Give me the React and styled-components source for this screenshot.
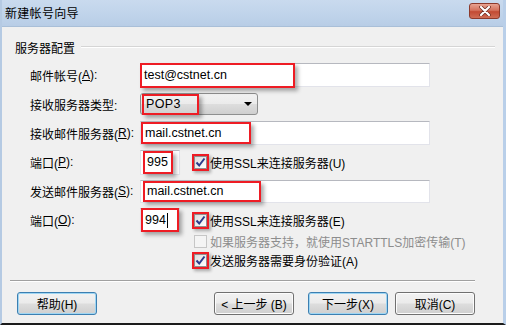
import React from 'react';
import styled, { createGlobalStyle } from 'styled-components';

const GlobalStyle = createGlobalStyle`
  html, body {
    margin: 0;
    padding: 0;
    background: #ffffff;
  }
  body {
    font-family: "Liberation Sans", "Noto Sans CJK SC", sans-serif;
    font-size: 12px;
    color: #000;
  }
`;

const Window = styled.div`
  width: 506px;
  height: 325px;
  box-sizing: border-box;
  display: flex;
  flex-direction: column;
  background: #f0f0f0;
  border-left: 2px solid #b5cae3;
  border-right: 3px solid #b9cfe9;
  border-bottom: 2px solid #1b1b1b;
`;

const TitleBar = styled.div`
  height: 26px;
  flex-shrink: 0;
  display: flex;
  align-items: center;
  justify-content: space-between;
  padding: 0 1px 0 3px;
  background: linear-gradient(to bottom, #c9daee 0%, #bfd3ea 60%, #b8cde6 100%);
  border-bottom: 1px solid #a9bfd8;
`;

const TitleText = styled.span`
  font-size: 12px;
  letter-spacing: 0.3px;
  margin-top: -1px;
`;

const CloseButton = styled.div`
  width: 31px;
  height: 16px;
  margin-top: -4px;
  margin-right: 2px;
  box-sizing: border-box;
  border: 1px solid #8d3a2c;
  border-radius: 3px;
  background: linear-gradient(to bottom, #e8a392 0%, #d4725d 45%, #c24a33 55%, #cf6d55 100%);
  display: flex;
  align-items: center;
  justify-content: center;
`;

const Body = styled.div`
  flex: 1;
  display: flex;
  flex-direction: column;
  padding: 12px 28px 0 6px;
`;

const GroupHeader = styled.div`
  display: flex;
  align-items: center;
  gap: 6px;
  height: 16px;
  padding-left: 7px;
  margin-right: -20px;
`;

const GroupLine = styled.div`
  flex: 1;
  height: 1px;
  background: #d5d5d5;
  border-bottom: 1px solid #ffffff;
`;

const Form = styled.div`
  display: grid;
  grid-template-columns: 110px 1fr;
  grid-template-rows: repeat(6, 24px) auto;
  row-gap: 5px;
  margin: 8px 0 0 22px;
`;

const Label = styled.div`
  display: flex;
  align-items: center;
  white-space: nowrap;
`;

const Cell = styled.div`
  display: flex;
  align-items: center;
  gap: 14px;
`;

const Field = styled.div`
  position: relative;
  box-sizing: border-box;
  width: ${(p) => p.width}px;
  height: ${(p) => p.height || 24}px;
  background: #ffffff;
  border: 1px solid #e2e3ea;
  border-top-color: #b6b8bf;
  font-size: 12.5px;
  display: flex;
  align-items: center;
`;

const Mark = styled.span`
  box-sizing: border-box;
  width: ${(p) => p.width}px;
  height: ${(p) => p.height}px;
  margin: 0 0 0 ${(p) => p.offset || 0}px;
  border: 2px solid #ee1c24;
  box-shadow: 3px 3px 4px rgba(0, 0, 0, 0.32);
  display: flex;
  align-items: center;
  padding-left: 2px;
  flex-shrink: 0;
`;

const Caret = styled.span`
  display: inline-block;
  width: 1px;
  height: 15px;
  background: #000;
  margin-left: 1px;
`;

const Select = styled.div`
  box-sizing: border-box;
  width: 118px;
  height: 22px;
  border: 1px solid #8e8f8f;
  border-radius: 3px;
  background: linear-gradient(to bottom, #f2f2f2 0%, #ebebeb 48%, #dddddd 52%, #cfcfcf 100%);
  display: flex;
  align-items: center;
  justify-content: space-between;
  padding-right: 5px;
  font-size: 12.5px;
  letter-spacing: 0.4px;
`;

const Arrow = styled.span`
  width: 0;
  height: 0;
  border-left: 4px solid transparent;
  border-right: 4px solid transparent;
  border-top: 4px solid #000;
`;

const Options = styled.div`
  grid-column: 2;
  display: flex;
  flex-direction: column;
  margin-top: -5px;
  padding-left: 54px;
`;

const CheckRow = styled.div`
  display: flex;
  align-items: center;
  height: 19px;
`;

const CheckOption = styled.label`
  display: flex;
  align-items: center;
  gap: 3px;
  white-space: nowrap;
  color: ${(p) => (p.disabled ? '#8d8d8d' : '#000')};
`;

const Box = styled.span`
  box-sizing: border-box;
  width: 13px;
  height: 13px;
  border: 1px solid ${(p) => (p.disabled ? '#c6c6c6' : '#8e8f8f')};
  background: ${(p) =>
    p.disabled ? '#f4f4f4' : 'linear-gradient(135deg, #dcdcdc 0%, #ffffff 100%)'};
  display: flex;
  align-items: center;
  justify-content: center;
`;

const BoxMark = styled.span`
  box-sizing: border-box;
  width: 17px;
  height: 17px;
  border: 2px solid #ee1c24;
  box-shadow: 2px 2px 3px rgba(0, 0, 0, 0.3);
  display: flex;
  align-items: center;
  justify-content: center;
  margin: 0 -2px;
`;

const Separator = styled.div`
  height: 1px;
  margin: 10px 0 0 2px;
  width: 465px;
  background: #a0a0a0;
  border-bottom: 1px solid #ffffff;
`;

const Footer = styled.div`
  display: flex;
  align-items: center;
  margin-top: 10px;
  padding-left: 9px;
`;

const Spacer = styled.div`
  flex: 1;
`;

const Button = styled.button`
  box-sizing: border-box;
  width: 80px;
  height: 23px;
  margin-left: ${(p) => p.gap || 0}px;
  border: 1px solid ${(p) => (p.focused ? '#3c7fb1' : '#707070')};
  border-radius: 3px;
  background: linear-gradient(to bottom, #f2f2f2 0%, #ebebeb 48%, #dddddd 52%, #cfcfcf 100%);
  box-shadow: ${(p) => (p.focused ? 'inset 0 0 0 1px #9fd6f3' : 'inset 0 0 0 1px #fcfcfc')};
  font-family: "Liberation Sans", "Noto Sans CJK SC", sans-serif;
  font-size: 12px;
  color: #000;
  padding: 0;
`;

const Check = ({ disabled }) => (
  <Box disabled={disabled}>
    {!disabled && (
      <svg width="11" height="11" viewBox="0 0 11 11">
        <path d="M1.5 5.5 L4.2 8.5 L9.5 1.5" fill="none" stroke="#2b3c8c" strokeWidth="2" />
      </svg>
    )}
  </Box>
);

const MarkedCheck = () => (
  <BoxMark>
    <Check />
  </BoxMark>
);

export default function App() {
  return (
    <>
      <GlobalStyle />
      <Window>
        <TitleBar>
          <TitleText>新建帐号向导</TitleText>
          <CloseButton>
            <svg width="14" height="10" viewBox="0 0 14 10">
              <path d="M3 1 L11 9 M11 1 L3 9" stroke="#6b2a1f" strokeWidth="3.6" strokeLinecap="round" />
              <path d="M3 1 L11 9 M11 1 L3 9" stroke="#ffffff" strokeWidth="2.2" strokeLinecap="round" />
            </svg>
          </CloseButton>
        </TitleBar>
        <Body>
          <GroupHeader>
            <span>服务器配置</span>
            <GroupLine />
          </GroupHeader>
          <Form>
            <Label>邮件帐号(<u>A</u>):</Label>
            <Cell>
              <Field width={290}>
                <Mark width={155} height={25} offset={-1}>test@cstnet.cn</Mark>
              </Field>
            </Cell>

            <Label>接收服务器类型:</Label>
            <Cell>
              <Select>
                <Mark width={57} height={21} offset={1}>POP3</Mark>
                <Arrow />
              </Select>
            </Cell>

            <Label>接收邮件服务器(<u>R</u>):</Label>
            <Cell>
              <Field width={290}>
                <Mark width={110} height={22} offset={0}>mail.cstnet.cn</Mark>
              </Field>
            </Cell>

            <Label>端口(<u>P</u>):</Label>
            <Cell>
              <Field width={40} height={25}>
                <Mark width={30} height={23} offset={2}>995</Mark>
              </Field>
              <CheckOption>
                <MarkedCheck />
                使用SSL来连接服务器(U)
              </CheckOption>
            </Cell>

            <Label>发送邮件服务器(<u>S</u>):</Label>
            <Cell>
              <Field width={290} height={23}>
                <Mark width={118} height={21} offset={2}>mail.cstnet.cn</Mark>
              </Field>
            </Cell>

            <Label>端口(<u>O</u>):</Label>
            <Cell>
              <Field width={40}>
                <Mark width={38} height={24} offset={0}>
                  994<Caret />
                </Mark>
              </Field>
              <CheckOption>
                <MarkedCheck />
                使用SSL来连接服务器(E)
              </CheckOption>
            </Cell>

            <Options>
              <CheckRow>
                <CheckOption disabled>
                  <Check disabled />
                  如果服务器支持，就使用STARTTLS加密传输(T)
                </CheckOption>
              </CheckRow>
              <CheckRow>
                <CheckOption>
                  <MarkedCheck />
                  发送服务器需要身份验证(A)
                </CheckOption>
              </CheckRow>
            </Options>
          </Form>
          <Separator />
          <Footer>
            <Button focused>帮助(H)</Button>
            <Spacer />
            <Button>&lt; 上一步 (B)</Button>
            <Button gap={14} focused>下一步(X)</Button>
            <Button gap={7}>取消(C)</Button>
          </Footer>
        </Body>
      </Window>
    </>
  );
}
